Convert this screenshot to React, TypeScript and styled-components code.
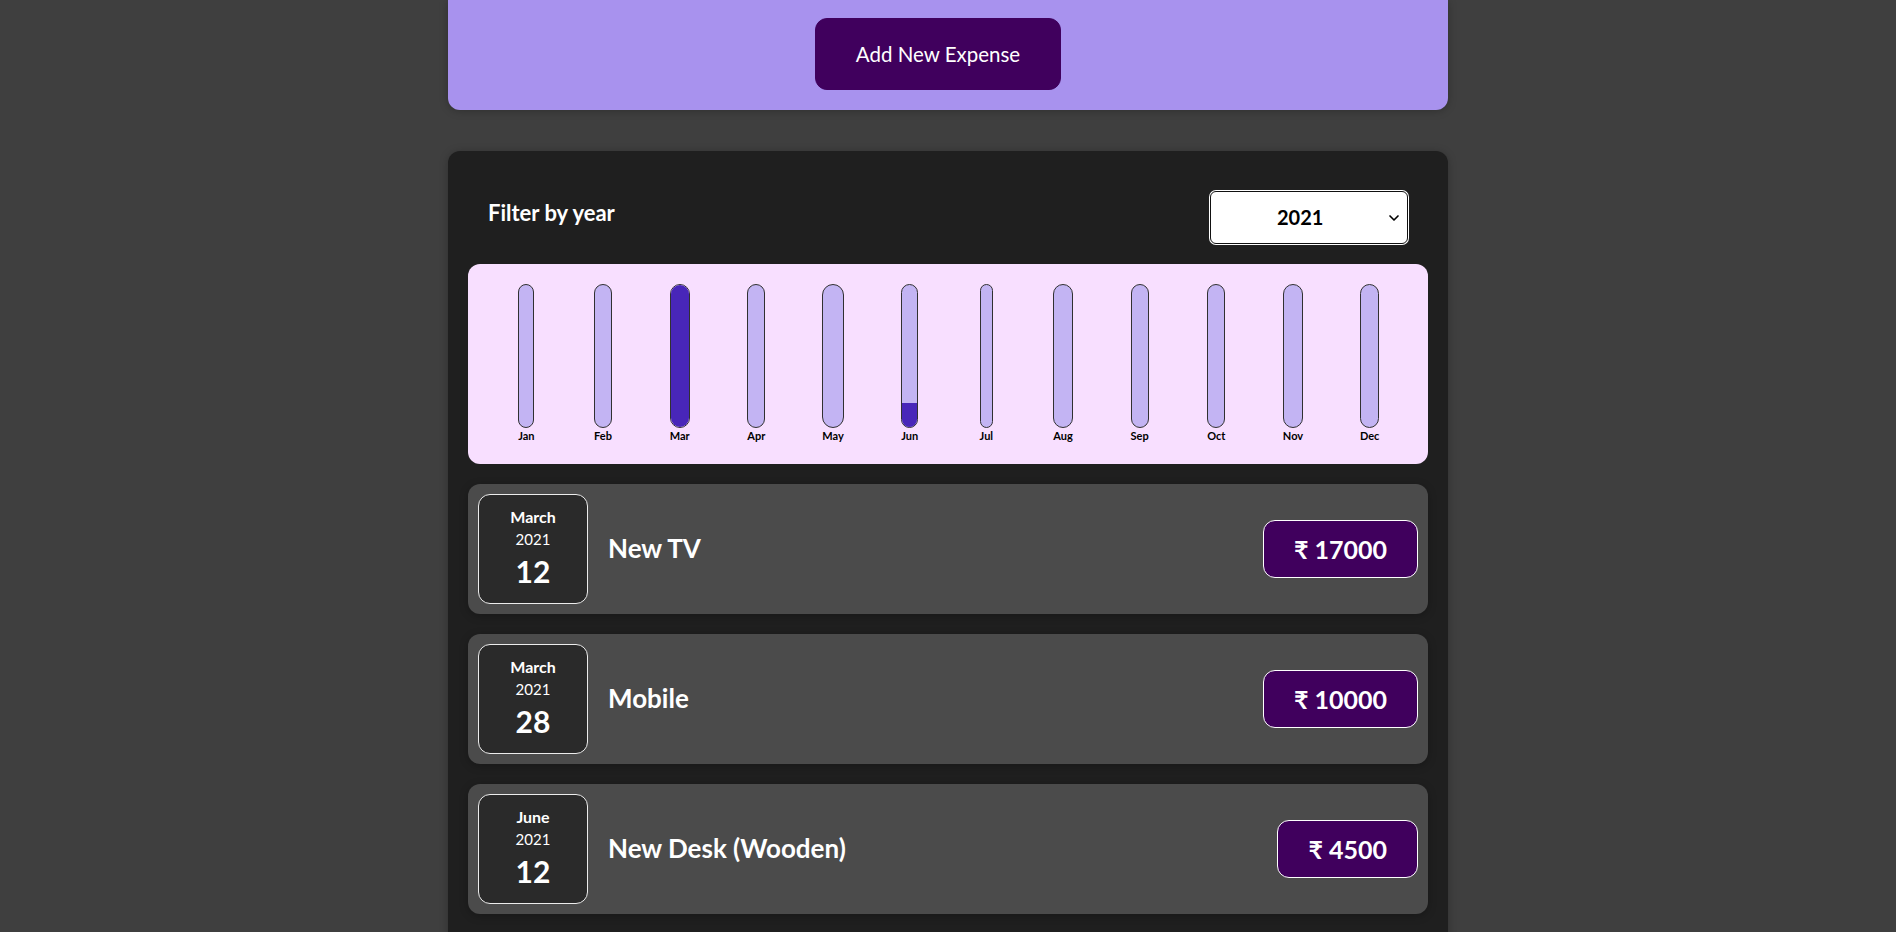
import React from "react";
import styled, { createGlobalStyle } from "styled-components";
import { ChevronDown } from "lucide-react";

const GlobalStyle = createGlobalStyle`
  * { box-sizing: border-box; }
  html, body { margin: 0; padding: 0; }
  body {
    background: #3f3f3f;
    font-family: Lato, "Noto Sans", sans-serif;
    line-height: 1.45;
  }
`;

const Page = styled.div`
  width: 100%;
  min-height: 932px;
  overflow: hidden;
`;

const NewExpenseCard = styled.div`
  width: 1000px;
  margin: 0 auto 41px;
  padding: 18px 20px 20px;
  background: #a892ee;
  border-radius: 0 0 12px 12px;
  box-shadow: 0 1px 8px rgba(0, 0, 0, 0.25);
  text-align: center;
`;

const AddButton = styled.button`
  font: inherit;
  font-size: 20.5px;
  line-height: 30px;
  padding: 20px 40px;
  margin-right: 20px;
  border: 1px solid #40005d;
  background: #40005d;
  color: #fff;
  border-radius: 12px;
  cursor: pointer;
`;

const ExpensesCard = styled.div`
  width: 1000px;
  margin: 0 auto 40px;
  padding: 20px;
  background: #1f1f1f;
  border-radius: 12px;
  box-shadow: 0 1px 8px rgba(0, 0, 0, 0.25);
`;

const Filter = styled.div`
  color: #fff;
  padding: 0 20px;
`;

const FilterControl = styled.div`
  display: flex;
  width: 100%;
  align-items: center;
  justify-content: space-between;
  margin: 20px 0;
`;

const FilterLabel = styled.label`
  font-size: 22px;
  font-weight: bold;
  line-height: 29px;
  margin-bottom: 10px;
`;

const SelectWrap = styled.div`
  position: relative;
  display: inline-flex;
`;

const YearSelect = styled.select`
  appearance: none;
  -webkit-appearance: none;
  font: inherit;
  font-size: 20px;
  font-weight: bold;
  width: 198px;
  height: 53px;
  padding: 0 30px 0 66px;
  border: 1px solid #111;
  box-shadow: 0 0 0 1px #fff;
  border-radius: 6px;
  background: #fff;
  color: #000;
`;

const SelectArrow = styled(ChevronDown)`
  position: absolute;
  right: 6px;
  top: 50%;
  transform: translateY(-50%);
  pointer-events: none;
  color: #000;
`;

const Chart = styled.div`
  height: 200px;
  padding: 20px;
  border-radius: 12px;
  background: #f8dfff;
  display: grid;
  grid-template-columns: repeat(12, 1fr);
  justify-items: center;
`;

const ChartBar = styled.div`
  height: 100%;
  display: flex;
  flex-direction: column;
  align-items: center;
`;

const BarInner = styled.div`
  flex: 1;
  width: 100%;
  border: 1px solid #313131;
  border-radius: 12px;
  background: #c3b4f3;
  overflow: hidden;
  display: flex;
  flex-direction: column;
  justify-content: flex-end;
`;

const BarFill = styled.div`
  width: 100%;
  background: #4826b9;
`;

const BarLabel = styled.div`
  font-size: 11px;
  font-weight: bold;
  line-height: 16px;
  color: #000;
  text-align: center;
`;

const List = styled.ul`
  list-style: none;
  margin: 0;
  padding: 0;
`;

const Item = styled.li`
  display: flex;
  align-items: center;
  padding: 10px;
  margin: 20px 0;
  border-radius: 12px;
  background: #4b4b4b;
  box-shadow: 0 2px 8px rgba(0, 0, 0, 0.25);
`;

const DateBox = styled.div`
  display: flex;
  flex-direction: column;
  align-items: center;
  justify-content: center;
  width: 110px;
  height: 110px;
  border: 1px solid #ececec;
  background: #2a2a2a;
  color: #fff;
  border-radius: 12px;
  flex-shrink: 0;
`;

const DateMonth = styled.div`
  font-size: 16px;
  font-weight: bold;
  line-height: 22px;
`;

const DateYear = styled.div`
  font-size: 15px;
  line-height: 22px;
`;

const DateDay = styled.div`
  font-size: 30px;
  font-weight: bold;
  line-height: 43px;
`;

const Title = styled.h2`
  flex: 1;
  margin: 0 20px;
  font-size: 26px;
  font-weight: bold;
  color: #fff;
`;

const Price = styled.div`
  font-size: 25px;
  font-weight: bold;
  line-height: 36px;
  color: #fff;
  background: #40005d;
  border: 1px solid #fff;
  padding: 10px 30px;
  border-radius: 12px;
`;

const months = ["Jan", "Feb", "Mar", "Apr", "May", "Jun", "Jul", "Aug", "Sep", "Oct", "Nov", "Dec"];

const expenses = [
  { id: 1, title: "New TV", amount: 17000, month: "March", year: 2021, day: 12, m: 2 },
  { id: 2, title: "Mobile", amount: 10000, month: "March", year: 2021, day: 28, m: 2 },
  { id: 3, title: "New Desk (Wooden)", amount: 4500, month: "June", year: 2021, day: 12, m: 5 },
];

export default function App() {
  const totals = months.map((_, i) =>
    expenses.filter((e) => e.m === i).reduce((s, e) => s + e.amount, 0)
  );
  const max = Math.max(...totals);

  return (
    <Page>
      <GlobalStyle />
      <NewExpenseCard>
        <AddButton>Add New Expense</AddButton>
      </NewExpenseCard>
      <ExpensesCard>
        <Filter>
          <FilterControl>
            <FilterLabel>Filter by year</FilterLabel>
            <SelectWrap>
              <YearSelect defaultValue="2021">
                <option value="2022">2022</option>
                <option value="2021">2021</option>
                <option value="2020">2020</option>
                <option value="2019">2019</option>
              </YearSelect>
              <SelectArrow size={16} strokeWidth={2.5} />
            </SelectWrap>
          </FilterControl>
        </Filter>
        <Chart>
          {months.map((label, i) => (
            <ChartBar key={label}>
              <BarInner>
                <BarFill style={{ height: `${max > 0 ? Math.round((totals[i] / max) * 100) : 0}%` }} />
              </BarInner>
              <BarLabel>{label}</BarLabel>
            </ChartBar>
          ))}
        </Chart>
        <List>
          {expenses.map((e) => (
            <Item key={e.id}>
              <DateBox>
                <DateMonth>{e.month}</DateMonth>
                <DateYear>{e.year}</DateYear>
                <DateDay>{e.day}</DateDay>
              </DateBox>
              <Title>{e.title}</Title>
              <Price>₹ {e.amount}</Price>
            </Item>
          ))}
        </List>
      </ExpensesCard>
    </Page>
  );
}
